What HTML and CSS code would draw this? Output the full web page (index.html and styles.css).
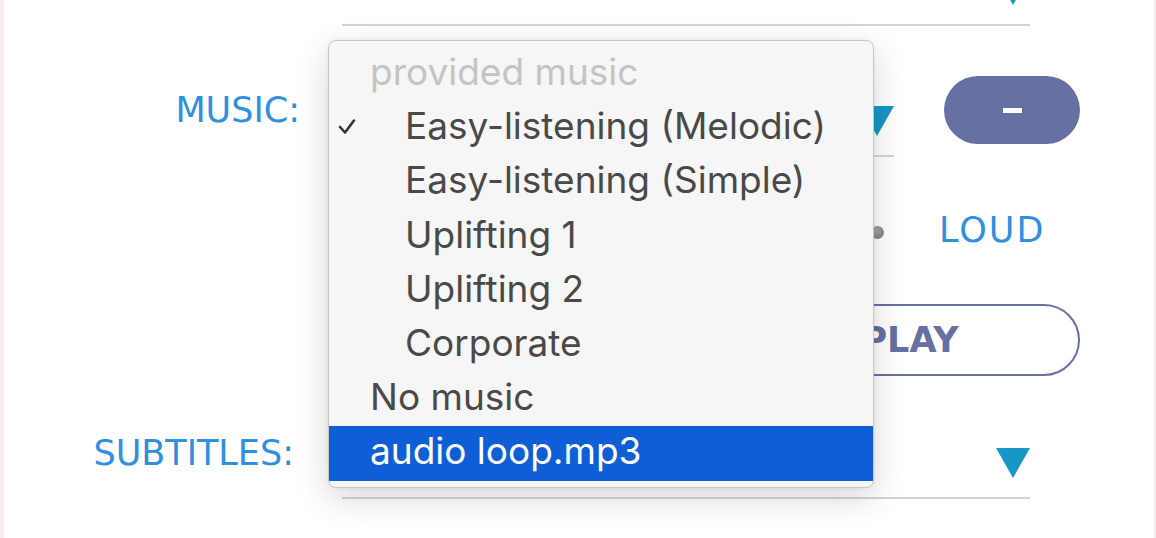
FILE: index.html
```html
<!DOCTYPE html>
<html lang="en">
<head>
  <meta charset="UTF-8">
  <meta name="viewport" content="width=device-width, initial-scale=1.0">
  <title>Video settings</title>
  <link rel="stylesheet" href="styles.css">
</head>
<body>

  <div class="page">
    <div class="form">

      <!-- previous field, scrolled up -->
      <div class="row row-top">
        <span></span>
        <div class="select select-wide"><span class="value"></span><span class="arrow"></span></div>
      </div>

      <div class="row row-music">
        <label class="label">MUSIC:</label>
        <div class="select"><span class="value"></span><span class="arrow"></span></div>
        <button class="btn-round" type="button"><span class="dash"></span></button>
      </div>

      <div class="row row-volume">
        <span></span>
        <div class="slider"><div class="track"></div><div class="thumb"></div></div>
        <span class="label label-loud">LOUD</span>
      </div>

      <div class="row row-play">
        <span></span>
        <button class="btn-play" type="button">PLAY</button>
      </div>

      <div class="row row-subs">
        <label class="label label-subs">SUBTITLES:</label>
        <div class="select select-wide"><span class="value"></span><span class="arrow"></span></div>
      </div>

    </div>

    <!-- open select popup -->
    <ul class="menu">
      <li class="group">provided music</li>
      <li class="option sub checked">
        <svg class="check" width="18" height="17" viewBox="0 0 18 17"><polyline points="2,9 7,14.5 16,2.5" fill="none" stroke="#333" stroke-width="2.6" stroke-linecap="round" stroke-linejoin="round"/></svg>
        Easy-listening (Melodic)
      </li>
      <li class="option sub">Easy-listening (Simple)</li>
      <li class="option sub">Uplifting 1</li>
      <li class="option sub">Uplifting 2</li>
      <li class="option sub">Corporate</li>
      <li class="option">No music</li>
      <li class="option active">audio loop.mp3</li>
    </ul>
  </div>

</body>
</html>
```

FILE: styles.css
```css
html, body {
  margin: 0;
  height: 100%;
  overflow: hidden;
}
body {
  background: #fff;
  border-left: 4px solid #f4efee;
  border-right: 2px solid #f4efee;
  box-sizing: border-box;
  font-family: "DejaVu Sans", sans-serif;
}
.page {
  position: relative;
  height: 100%;
}
.form {
  display: flex;
  flex-direction: column;
}
.row {
  display: grid;
  grid-template-columns: 338px 552px 186px;
  align-items: center;
}
.row-top {
  height: 26px;
}
.row-top .select {
  height: 26px;
}
.row-music {
  margin-top: 37px;
  height: 94px;
}
.row-volume {
  margin-top: 43px;
  height: 60px;
}
.row-play {
  margin-top: 44px;
  height: 72px;
}
.row-subs {
  margin-top: 31px;
  height: 92px;
}
.label {
  color: #318fe0;
  font-size: 35px;
  text-align: right;
  padding-right: 42px;
}
.label-subs {
  padding-right: 48px;
}
.label-loud {
  text-align: left;
  padding: 0 0 0 45px;
  letter-spacing: 2px;
}
.select {
  height: 100%;
  box-sizing: border-box;
  display: flex;
  align-items: flex-end;
  justify-content: space-between;
  padding-bottom: 19px;
  border-bottom: 2px solid #d8d2d0;
}
.select-wide {
  grid-column: 2 / 4;
  margin-right: 50px;
}
.arrow {
  width: 0;
  height: 0;
  border-left: 17px solid transparent;
  border-right: 17px solid transparent;
  border-top: 30px solid #1897c6;
}
.btn-round {
  justify-self: end;
  width: 136px;
  height: 68px;
  border: none;
  border-radius: 34px;
  background: #6670a3;
  display: flex;
  align-items: center;
  justify-content: center;
  padding: 0;
}
.dash {
  width: 19px;
  height: 5px;
  background: #fff;
}
.slider {
  display: flex;
  align-items: center;
  padding: 4px 10px 0 40px;
}
.track {
  flex: 1;
  height: 4px;
  background: #d8d2d0;
  border-radius: 2px;
}
.thumb {
  width: 13px;
  height: 13px;
  border-radius: 50%;
  background: radial-gradient(circle at 40% 35%, #a6a6a6, #7a7a7a);
}
.btn-play {
  grid-column: 2 / 4;
  justify-self: end;
  width: 344px;
  height: 72px;
  box-sizing: border-box;
  border: 2px solid #6670a3;
  border-radius: 36px;
  background: #fff;
  color: #6670a3;
  font-family: "DejaVu Sans", sans-serif;
  font-weight: bold;
  font-size: 35px;
  padding: 0 0 0 4px;
}
.menu {
  position: absolute;
  left: 324px;
  top: 40px;
  width: 546px;
  height: 448px;
  box-sizing: border-box;
  margin: 0;
  padding: 6px 0 0;
  list-style: none;
  background: #f6f6f6;
  border: 1px solid #c6c6c6;
  border-radius: 8px;
  box-shadow: 0 10px 34px rgba(0, 0, 0, 0.16), 0 0 4px rgba(0, 0, 0, 0.06);
  font-family: Inter, "Noto Sans", sans-serif;
  font-size: 37px;
  overflow: hidden;
}
.menu li {
  height: 54.2px;
  line-height: 50px;
  padding-left: 41px;
  position: relative;
  color: #494949;
  white-space: nowrap;
}
.menu .group {
  color: #c4c4c4;
}
.menu .sub {
  padding-left: 76px;
}
.menu .active {
  background: #0e5fd6;
  color: #fff;
}
.check {
  position: absolute;
  left: 9px;
  top: 17px;
}
```
